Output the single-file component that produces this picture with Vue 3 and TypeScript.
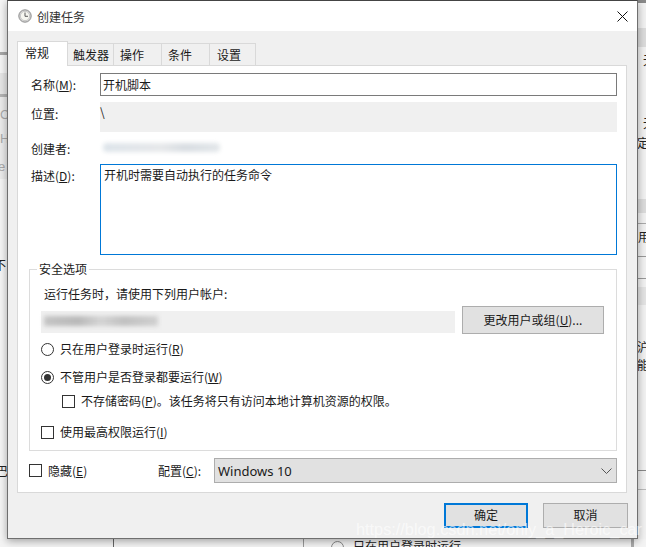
<script setup lang="ts">
const tabs = ['触发器', '操作', '条件', '设置']
</script>

<template>
  <div class="desk">
    <div class="bg-left">
      <i class="l0"></i><i class="l1"></i><i class="l2"></i><i class="l3"></i>
      <span class="lt t1">C</span><span class="lt t2">H</span><span class="lt t3">e</span><span class="lt t4">不</span><span class="lt t5">巴</span>
    </div>
    <div class="bg-right">
      <i class="r1"></i><i class="r2"></i><i class="r3"></i><i class="r4"></i><i class="r5"></i><i class="r6"></i><i class="r7"></i>
      <span class="rt t1">无</span><span class="rt t2">无</span><span class="rt t3">定</span><span class="rt t6">用</span><span class="rt t4">沪</span><span class="rt t5">能</span>
    </div>
    <div class="bg-bottom">
      <i class="b1"></i><i class="b2"></i><i class="b3"></i>
      <span class="radio-bg"></span><span class="bt">只在用户登录时运行</span>
    </div>

    <div class="window">
      <header class="title">
        <svg class="clock" width="14" height="14" viewBox="0 0 14 14">
          <circle cx="7" cy="7" r="6.2" fill="#d8d8d8" stroke="#8c8c8c" />
          <circle cx="7" cy="7" r="4.6" fill="#f6f6f0" stroke="#b5b5b5" stroke-width=".6" />
          <path d="M7 3.5V7.3H10" fill="none" stroke="#5a5a5a" />
        </svg>
        <span>创建任务</span>
        <svg class="close" width="11" height="11" viewBox="0 0 11 11">
          <path d="M.5.5l10 10M10.5.5l-10 10" stroke="#111" fill="none" />
        </svg>
      </header>
      <div class="client">
        <nav class="tabs">
          <div class="tab active">常规</div>
          <div v-for="t in tabs" :key="t" class="tab">{{ t }}</div>
        </nav>
        <section class="panel">
          <div class="row name">
            <label>名称(<u>M</u>):</label>
            <div class="input">开机脚本</div>
          </div>
          <div class="row loc">
            <label>位置:</label>
            <div class="field">\</div>
          </div>
          <div class="row creator">
            <label>创建者:</label>
            <div class="blur-wrap"><span class="smear s1"></span></div>
          </div>
          <div class="row desc">
            <label>描述(<u>D</u>):</label>
            <div class="input area">开机时需要自动执行的任务命令</div>
          </div>

          <fieldset class="group">
            <legend>安全选项</legend>
            <div class="run-as">运行任务时，请使用下列用户帐户:</div>
            <div class="user-row">
              <div class="user-field"><span class="smear s2"></span></div>
              <button class="btn change">更改用户或组(<u>U</u>)...</button>
            </div>
            <div class="opt r-a"><span class="radio"></span>只在用户登录时运行(<u>R</u>)</div>
            <div class="opt r-b"><span class="radio on"></span>不管用户是否登录都要运行(<u>W</u>)</div>
            <div class="opt c-a"><span class="check"></span>不存储密码(<u>P</u>)。该任务将只有访问本地计算机资源的权限。</div>
            <div class="opt c-b"><span class="check"></span>使用最高权限运行(<u>I</u>)</div>
          </fieldset>

          <div class="foot-row">
            <div class="opt hide"><span class="check"></span>隐藏(<u>E</u>)</div>
            <label class="cfg">配置(<u>C</u>):</label>
            <div class="select">
              <span>Windows 10</span>
              <svg width="11" height="6" viewBox="0 0 11 6"><path d="M.5.5l5 5 5-5" fill="none" stroke="#555" /></svg>
            </div>
          </div>
        </section>
        <footer class="actions">
          <button class="btn ok">确定</button>
          <button class="btn cancel">取消</button>
        </footer>
      </div>
    </div>
    <div class="mark">https://blog.csdn.net/only_a_Heroic_car</div>
  </div>
</template>

<style>
html, body { margin: 0; background: #fff; }
</style>

<style scoped>
.desk {
  position: relative;
  width: 646px;
  height: 547px;
  overflow: hidden;
  padding: 0 8px 8px 7px;
  box-sizing: border-box;
  background: #fff;
  font-family: "Noto Sans CJK SC", "Liberation Sans", sans-serif;
  font-size: 12px;
  color: #1a1a1a;
}
.bg-left, .bg-right, .bg-bottom { position: absolute; display: block; overflow: hidden; }
.bg-left { left: 0; top: 0; width: 8px; height: 547px; background: #f6f6f6; }
.bg-left i, .bg-right i, .bg-bottom i { position: absolute; display: block; }
.l0 { left: 0; top: 52px; width: 8px; height: 3px; background: #a8a8a8; }
.l1 { left: 0; top: 73px; width: 8px; height: 21px; background: #e6e6e6; }
.l3 { left: 0; top: 94px; width: 8px; height: 3px; background: #b4b4b4; }
.l2 { left: 0; top: 97px; width: 8px; height: 82px; background: #ececec; }
.lt { position: absolute; left: 0; color: #222; font-size: 12px; line-height: 14px; }
.bg-left .t1, .bg-left .t2, .bg-left .t3 { color: #aaa; font-family: "Liberation Sans", sans-serif; font-size: 13px; }
.bg-left .t1 { top: 108px; }
.bg-left .t2 { top: 132px; }
.bg-left .t3 { top: 160px; left: -2px; }
.bg-left .t4 { top: 258px; left: -6px; }
.bg-left .t5 { top: 464px; left: -4px; }
.bg-right { left: 638px; top: 0; width: 8px; height: 547px; background: #f2f2f2; }
.r1 { left: 0; top: 0; width: 8px; height: 3px; background: #8a8a8a; }
.r2 { left: 0; top: 28px; width: 8px; height: 19px; background: #dcdcdc; }
.r3 { left: 0; top: 199px; width: 8px; height: 24px; background: linear-gradient(#dcdcdc 60%, #f2f2f2 60%); border-bottom: 1px solid #aaa; }
.r4 { left: 0; top: 256px; width: 8px; height: 1px; background: #999; }
.r5 { left: 0; top: 278px; width: 8px; height: 1px; background: #999; }
.r6 { left: 0; top: 287px; width: 8px; height: 18px; background: #e4e4e4; }
.r7 { left: 0; top: 470px; width: 8px; height: 18px; border-top: 1px solid #888; border-bottom: 1px solid #bbb; }
.rt { position: absolute; left: 5px; font-size: 12px; line-height: 14px; color: #222; }
.bg-right .t1 { top: 53px; }
.bg-right .t2 { top: 116px; }
.bg-right .t3 { top: 136px; left: -1px; }
.bg-right .t6 { top: 230px; left: 0; }
.bg-right .t4 { top: 340px; left: -1px; }
.bg-right .t5 { top: 358px; left: -1px; }
.bg-bottom { left: 0; top: 539px; width: 646px; height: 8px; background: #f4f4f4; }
.b1 { left: 113px; top: 0; width: 1px; height: 8px; background: #666; }
.b2 { left: 303px; top: 0; width: 1px; height: 8px; background: #999; }
.b3 { left: 631px; top: 0; width: 3px; height: 8px; background: #aaa; }
.radio-bg { position: absolute; left: 331px; top: 2px; width: 11px; height: 11px; border: 1px solid #888; border-radius: 50%; }
.bt { position: absolute; left: 353px; top: -1px; font-size: 12px; line-height: 16px; color: #222; }

.window {
  position: relative;
  height: 539px;
  box-sizing: border-box;
  border: 1px solid #6f6f6f;
  border-top-color: #444;
  box-shadow: 0 2px 8px rgba(0, 0, 0, .35);
  background: #f0f0f0;
  display: flex;
  flex-direction: column;
}
.title {
  height: 30px;
  flex: none;
  background: #fff;
  display: flex;
  align-items: center;
  padding: 0 9px 0 10px;
  gap: 5px;
  font-size: 12px;
  color: #333;
}
.close { margin-left: auto; }
.client { flex: 1; padding: 10px 10px 0 9px; display: flex; flex-direction: column; }
.tabs { display: flex; align-items: flex-end; height: 24px; position: relative; z-index: 1; }
.tab {
  height: 22px;
  box-sizing: border-box;
  padding: 0 0 0 6px;
  line-height: 21px;
  border: 1px solid #d9d9d9;
  border-bottom: 0;
  border-left: 0;
  white-space: nowrap;
}
.tab:nth-child(2) { width: 46px; padding-left: 5px; }
.tab:nth-child(3), .tab:nth-child(4) { width: 48px; }
.tab:nth-child(5) { width: 46px; padding-left: 7px; }
.tab.active {
  width: 51px;
  height: 25px;
  margin-bottom: -1px;
  background: #fff;
  border-left: 1px solid #d9d9d9;
  line-height: 21px;
  padding-left: 7px;
}
.panel {
  height: 428px;
  width: 610px;
  box-sizing: border-box;
  border: 1px solid #d9d9d9;
  background: #fff;
  padding: 7px 9px 0 11px;
  display: flex;
  flex-direction: column;
}
.row { display: flex; }
.row label { width: 71px; flex: none; line-height: 17px; padding-top: 3px; padding-left: 2px; box-sizing: border-box; }
.input {
  flex: 1;
  border: 1px solid #7a7a7a;
  padding: 0 2px;
  line-height: 21px;
}
.name .input { height: 23px; box-sizing: border-box; }
.loc { margin-top: 6px; height: 30px; }
.field { flex: 1; background: #f0f0f0; padding-left: 0; line-height: 20px; }
.creator { margin-top: 4px; height: 24px; align-items: center; }
.creator label { padding-top: 0; }
.blur-wrap { flex: 1; position: relative; height: 16px; }
.desc { margin-top: 4px; }
.area { height: 91px; box-sizing: border-box; border-color: #0078d7; line-height: 20px; padding-left: 3px; }
.smear { position: absolute; display: block; filter: blur(2px); }
.s1 { left: 3px; top: 3px; width: 117px; height: 9px; background: linear-gradient(90deg, #dde4ea, #e6e8ea 50%, #d8dde2 70%, #e3e7ea); border-radius: 4px; }
.s2 { left: 3px; top: 5px; width: 114px; height: 10px; background: linear-gradient(90deg, #c4c4c4, #b8b8b8 30%, #d4d4d4 50%, #c0c0c0 70%, #d0d0d0); }

.group {
  margin: 7px 0 0 0;
  padding: 0;
  height: 189px;
  width: 588px;
  box-sizing: border-box;
  border: 1px solid #dcdcdc;
  position: relative;
  min-width: 0;
}
.group legend {
  margin-left: 7px;
  padding: 0 2px;
  line-height: 14px;
  font-size: 12px;
}
.run-as { margin: 9px 0 0 14px; line-height: 18px; }
.user-row { display: flex; align-items: center; gap: 7px; margin: 3px 0 0 11px; height: 28px; }
.user-field { width: 414px; height: 22px; background: #f0f0f0; position: relative; margin-top: 4px; }
.btn {
  font: inherit;
  color: #1a1a1a;
  background: #e1e1e1;
  border: 1px solid #adadad;
  padding: 0;
  border-radius: 0;
}
.change { width: 142px; height: 28px; margin-top: -1px; }
.opt { display: flex; align-items: center; line-height: 16px; }
.radio, .check { flex: none; box-sizing: border-box; width: 13px; height: 13px; border: 1px solid #333; margin-right: 6px; background: #fff; position: relative; }
.radio { border-radius: 50%; }
.radio.on::after { content: ""; position: absolute; left: 2px; top: 2px; width: 7px; height: 7px; border-radius: 50%; background: #333; }
.r-a { margin: 7px 0 0 11px; }
.r-b { margin: 12px 0 0 11px; }
.c-a { margin: 8px 0 0 32px; }
.c-b { margin: 15px 0 0 11px; }
.foot-row { display: flex; align-items: center; margin-top: 7px; height: 25px; }
.hide { width: 129px; }
.cfg { width: 56px; }
.select {
  flex: none;
  width: 403px;
  height: 25px;
  box-sizing: border-box;
  background: #e1e1e1;
  border: 1px solid #adadad;
  display: flex;
  align-items: center;
  justify-content: space-between;
  padding: 0 4px 0 3px;
  font-family: "Noto Sans", "Noto Sans CJK SC", sans-serif;
  font-size: 13px;
}
.actions { display: flex; justify-content: flex-end; gap: 15px; padding: 10px 0 0 0; width: 611px; }
.ok, .cancel { height: 25px; width: 85px; padding-bottom: 2px; }
.ok { border: 2px solid #0078d7; width: 84px; }
.mark {
  position: absolute;
  left: 356px;
  top: 518px;
  font-family: "Liberation Sans", sans-serif;
  font-size: 16.3px;
  line-height: 22px;
  color: rgba(255, 255, 255, .62);
  white-space: nowrap;
}
</style>
